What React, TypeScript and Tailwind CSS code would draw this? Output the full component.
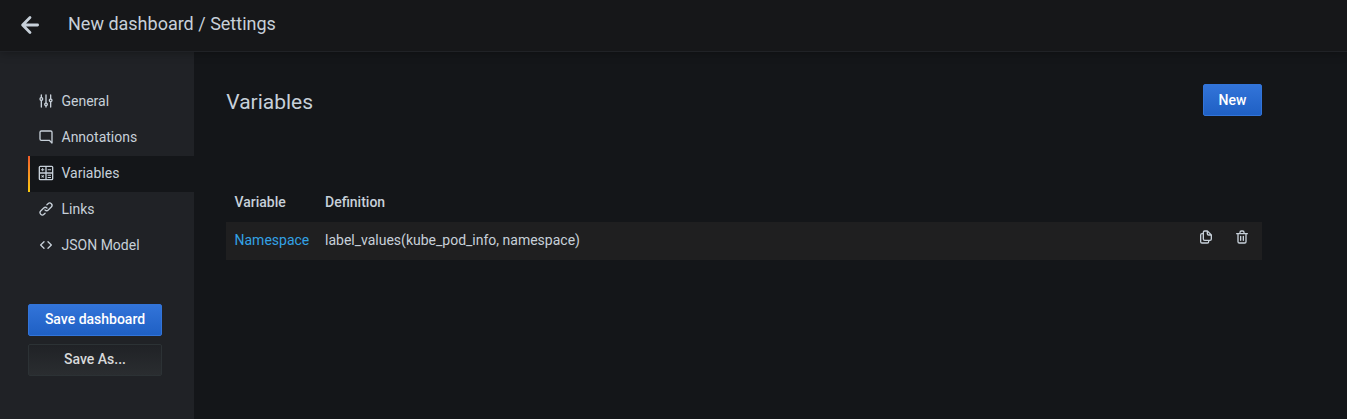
import React from 'react';

const icons = {
  sliders:
    'M20,8.18V3a1,1,0,0,0-2,0V8.18a3,3,0,0,0,0,5.64V21a1,1,0,0,0,2,0V13.82a3,3,0,0,0,0-5.64ZM19,12a1,1,0,1,1,1-1A1,1,0,0,1,19,12Zm-6,2.18V3a1,1,0,0,0-2,0V14.18a3,3,0,0,0,0,5.64V21a1,1,0,0,0,2,0V19.82a3,3,0,0,0,0-5.64ZM12,18a1,1,0,1,1,1-1A1,1,0,0,1,12,18ZM6,6.18V3A1,1,0,0,0,4,3V6.18a3,3,0,0,0,0,5.64V21a1,1,0,0,0,2,0V11.82A3,3,0,0,0,6,6.18ZM5,10A1,1,0,1,1,6,9,1,1,0,0,1,5,10Z',
  comment:
    'M19,2H5A3,3,0,0,0,2,5V15a3,3,0,0,0,3,3H16.59l3.7,3.71A1,1,0,0,0,21,22a.84.84,0,0,0,.38-.08A1,1,0,0,0,22,21V5A3,3,0,0,0,19,2Zm1,16.59-2.29-2.3A1,1,0,0,0,17,16H5a1,1,0,0,1-1-1V5A1,1,0,0,1,5,4H19a1,1,0,0,1,1,1Z',
  calculator:
    'M20.5,1H3.5A2.5,2.5,0,0,0,1,3.5V20.5A2.5,2.5,0,0,0,3.5,23H20.5A2.5,2.5,0,0,0,23,20.5V3.5A2.5,2.5,0,0,0,20.5,1ZM11,21H3V13h8Zm0-10H3V3h8Zm10,10H13V13h8Zm0-10H13V3h8ZM6.3,9.5H7.7V7.7H9.5V6.3H7.7V4.5H6.3V6.3H4.5V7.7H6.3ZM14.5,7.75h5V6.25h-5ZM14.5,16.25h5v-1.5h-5Zm0,3.25h5V18h-5ZM4.9,15.9,6,17,4.9,18.1l1,1L7,18l1.1,1.1,1-1L8,17l1.1-1.1-1-1L7,16,5.9,14.9Z',
  link:
    'M10,17.55,8.23,19.27a2.47,2.47,0,0,1-3.5-3.5l4.54-4.55a2.46,2.46,0,0,1,3.39-.09l.12.1a1,1,0,0,0,1.4-1.43A2.75,2.75,0,0,0,14,9.59a4.46,4.46,0,0,0-6.09.22L3.31,14.36a4.48,4.48,0,0,0,6.33,6.33L11.37,19A1,1,0,0,0,10,17.55ZM20.69,3.31a4.49,4.49,0,0,0-6.33,0L12.63,5A1,1,0,0,0,14,6.45l1.73-1.72a2.47,2.47,0,0,1,3.5,3.5l-4.54,4.55a2.46,2.46,0,0,1-3.39.09l-.12-.1a1,1,0,0,0-1.4,1.43,2.75,2.75,0,0,0,.23.21,4.47,4.47,0,0,0,6.09-.22l4.55-4.55A4.49,4.49,0,0,0,20.69,3.31Z',
  code: 'M9.71,6.29a1,1,0,0,0-1.42,0l-5,5a1,1,0,0,0,0,1.42l5,5a1,1,0,0,0,1.42,0,1,1,0,0,0,0-1.42L5.41,12l4.3-4.29A1,1,0,0,0,9.71,6.29Zm11,5-5-5a1,1,0,0,0-1.42,1.42L18.59,12l-4.3,4.29a1,1,0,0,0,0,1.42,1,1,0,0,0,1.42,0l5-5A1,1,0,0,0,20.71,11.29Z',
  copy: 'M21,8.94a1.31,1.31,0,0,0-.06-.27l0-.09a1.07,1.07,0,0,0-.19-.28h0l-6-6h0a1.07,1.07,0,0,0-.28-.19.32.32,0,0,0-.09,0A.88.88,0,0,0,14.05,2H10A3,3,0,0,0,7,5V6H6A3,3,0,0,0,3,9V19a3,3,0,0,0,3,3h8a3,3,0,0,0,3-3V18h1a3,3,0,0,0,3-3V9S21,9,21,8.94ZM15,5.41,17.59,8H16a1,1,0,0,1-1-1ZM15,19a1,1,0,0,1-1,1H6a1,1,0,0,1-1-1V9A1,1,0,0,1,6,8H7v7a3,3,0,0,0,3,3h5Zm4-4a1,1,0,0,1-1,1H10a1,1,0,0,1-1-1V5a1,1,0,0,1,1-1h3V7a3,3,0,0,0,3,3h3Z',
  trash:
    'M10,18a1,1,0,0,0,1-1V11a1,1,0,0,0-2,0v6A1,1,0,0,0,10,18ZM20,6H16V5a3,3,0,0,0-3-3H11A3,3,0,0,0,8,5V6H4A1,1,0,0,0,4,8H5V19a3,3,0,0,0,3,3h8a3,3,0,0,0,3-3V8h1a1,1,0,0,0,0-2ZM10,5a1,1,0,0,1,1-1h2a1,1,0,0,1,1,1V6H10Zm7,14a1,1,0,0,1-1,1H8a1,1,0,0,1-1-1V8H17Zm-3-1a1,1,0,0,0,1-1V11a1,1,0,0,0-2,0v6A1,1,0,0,0,14,18Z',
};

type IconName = keyof typeof icons;

function Icon({ name, className = '' }: { name: IconName; className?: string }) {
  return (
    <svg viewBox="0 0 24 24" fill="currentColor" className={`size-4 shrink-0 ${className}`} aria-hidden="true">
      <path d={icons[name]} />
    </svg>
  );
}

const sections: { label: string; icon: IconName; active?: boolean }[] = [
  { label: 'General', icon: 'sliders' },
  { label: 'Annotations', icon: 'comment' },
  { label: 'Variables', icon: 'calculator', active: true },
  { label: 'Links', icon: 'link' },
  { label: 'JSON Model', icon: 'code' },
];

function Sidebar() {
  return (
    <aside className="flex w-[194px] shrink-0 flex-col bg-[#202226] pl-7 pt-8">
      <nav className="flex flex-col">
        {sections.map((s) => (
          <a key={s.label} className={`flex h-9 items-stretch ${s.active ? 'bg-[#141619]' : ''}`}>
            <span className={`w-0.5 ${s.active ? 'bg-linear-to-b from-[#f05a28] to-[#fbca0a]' : ''}`} />
            <span className="flex items-center gap-[7.5px] pb-0.5 pl-2">
              <Icon name={s.icon} />
              <span>{s.label}</span>
            </span>
          </a>
        ))}
      </nav>
      <div className="mt-10 flex w-[134px] flex-col gap-2">
        <button className="h-8 rounded-[2px] border border-[#3274d9] bg-linear-to-b from-[#3274d9] to-[#1f60c4] pb-0.5 font-medium text-white">
          Save dashboard
        </button>
        <button className="h-8 rounded-[2px] border border-[#2c3235] bg-linear-to-b from-[#202226] to-[#2a2d30] pb-0.5 font-medium text-[#d8d9da]">
          Save As...
        </button>
      </div>
    </aside>
  );
}

export default function App() {
  return (
    <div className="flex h-screen flex-col overflow-hidden bg-[#141619] font-['Roboto',sans-serif] text-sm text-[#c7d0d9]">
      <header className="relative z-10 flex h-[52px] shrink-0 items-center border-b border-[#202226] bg-[#161719] pl-5 shadow-[0_0_10px_rgba(0,0,0,0.35)]">
        <svg viewBox="0 0 20 20" className="mb-px size-5" fill="none" stroke="currentColor" strokeWidth="2.8" strokeLinecap="round" strokeLinejoin="round">
          <path d="M10 2.6 2.6 10l7.400 7.400M3 10h14.600" />
        </svg>
        <h1 className="ml-7 pb-1 text-lg leading-6">New dashboard / Settings</h1>
      </header>
      <div className="flex min-h-0 flex-1">
        <Sidebar />
        <main className="min-w-0 flex-1 pl-8 pr-[85px] pt-8">
          <div className="flex h-8 items-center justify-between">
            <h2 className="pl-[0.25px] pt-1 text-[21px] leading-8">Variables</h2>
            <button className="h-8 w-[59px] rounded-[2px] border border-[#3274d9] bg-linear-to-b from-[#3274d9] to-[#1f60c4] font-medium text-white">
              New
            </button>
          </div>
          <table className="mt-[66px] w-full table-fixed border-collapse text-left">
            <colgroup>
              <col className="w-[91px]" />
              <col />
              <col className="w-9" />
              <col className="w-[38px]" />
            </colgroup>
            <thead>
              <tr className="h-10">
                <th className="pl-[8.5px] font-medium">Variable</th>
                <th className="pl-2 font-medium">Definition</th>
                <th colSpan={2} />
              </tr>
            </thead>
            <tbody>
              <tr className="h-[38px] bg-[#1f1f20]">
                <td className="pb-0.5 pl-[8.5px] text-[#33a2e5]">Namespace</td>
                <td className="pb-0.5 pl-2">label_values(kube_pod_info, namespace)</td>
                <td>
                  <Icon name="copy" className="mb-2 ml-2.5" />
                </td>
                <td>
                  <Icon name="trash" className="mb-2 ml-2.5" />
                </td>
              </tr>
            </tbody>
          </table>
        </main>
      </div>
    </div>
  );
}
